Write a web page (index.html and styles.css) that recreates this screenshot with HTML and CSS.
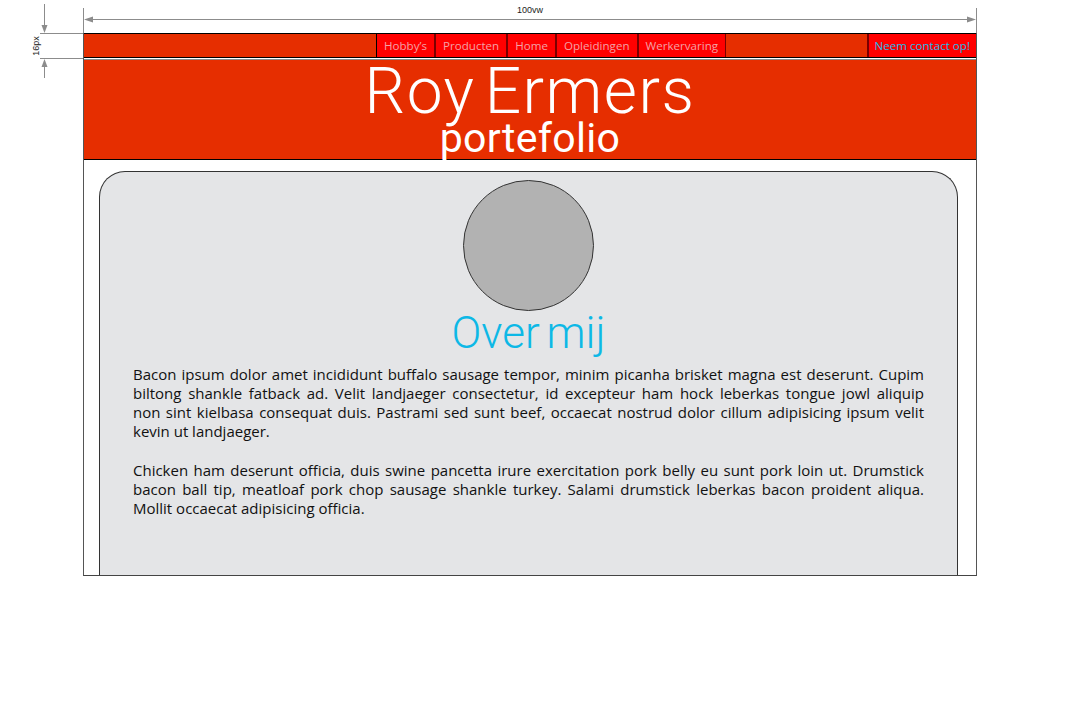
FILE: index.html
```html
<!DOCTYPE html>
<html lang="nl">
<head>
<meta charset="utf-8">
<title>Roy Ermers portefolio</title>
<link rel="stylesheet" href="styles.css">
</head>
<body>
<svg class="annot" width="1074" height="80" viewBox="0 0 1074 80" aria-hidden="true">
  <g stroke="#8c8c8c" stroke-width="1" fill="none">
    <line x1="83.5" y1="8" x2="83.5" y2="33"/>
    <line x1="976.5" y1="8" x2="976.5" y2="33"/>
    <line x1="92" y1="19.5" x2="967" y2="19.5"/>
    <line x1="40" y1="33.5" x2="83" y2="33.5"/>
    <line x1="40" y1="58.5" x2="83" y2="58.5"/>
    <line x1="44.5" y1="4" x2="44.5" y2="26"/>
    <line x1="44.5" y1="66" x2="44.5" y2="78"/>
  </g>
  <g fill="#8c8c8c">
    <polygon points="84,19.5 93,16.5 93,22.5"/>
    <polygon points="976,19.5 967,16.5 967,22.5"/>
    <polygon points="44.5,33 41.5,25 47.5,25"/>
    <polygon points="44.5,59 41.5,67 47.5,67"/>
  </g>
  <text x="530" y="13" class="dim" text-anchor="middle">100vw</text>
  <text x="0" y="0" class="dim" text-anchor="middle" transform="translate(39 46) rotate(-90)">16px</text>
</svg>

<div class="frame">
  <nav class="nav">
    <div class="nav-fill"></div>
    <a class="nav-item">Hobby’s</a>
    <a class="nav-item">Producten</a>
    <a class="nav-item">Home</a>
    <a class="nav-item">Opleidingen</a>
    <a class="nav-item">Werkervaring</a>
    <div class="nav-gap"></div>
    <a class="nav-item contact">Neem contact op!</a>
  </nav>
  <header class="header">
    <h1 class="title">Roy Ermers</h1>
    <p class="subtitle">portefolio</p>
  </header>
  <main class="main">
    <section class="card">
      <div class="avatar"></div>
      <h2 class="card-title">Over mij</h2>
      <p class="text">
        <span class="ln">Bacon ipsum dolor amet incididunt buffalo sausage tempor, minim picanha brisket magna est deserunt. Cupim</span>
        <span class="ln">biltong shankle fatback ad. Velit landjaeger consectetur, id excepteur ham hock leberkas tongue jowl aliquip</span>
        <span class="ln">non sint kielbasa consequat duis. Pastrami sed sunt beef, occaecat nostrud dolor cillum adipisicing ipsum velit</span>
        <span class="ln">kevin ut landjaeger.</span>
      </p>
      <p class="text">
        <span class="ln">Chicken ham deserunt officia, duis swine pancetta irure exercitation pork belly eu sunt pork loin ut. Drumstick</span>
        <span class="ln">bacon ball tip, meatloaf pork chop sausage shankle turkey. Salami drumstick leberkas bacon proident aliqua.</span>
        <span class="ln">Mollit occaecat adipisicing officia.</span>
      </p>
    </section>
  </main>
</div>
</body>
</html>
```

FILE: styles.css
```css
html, body {
  margin: 0;
  padding: 0;
  background: #ffffff;
}

body {
  position: relative;
  width: 1074px;
  height: 708px;
  overflow: hidden;
  font-family: "Open Sans", "Noto Sans", sans-serif;
}

.annot {
  position: absolute;
  left: 0;
  top: 0;
}

.dim {
  font-family: "Liberation Sans", Arial, sans-serif;
  font-size: 9px;
  fill: #222;
}

.frame {
  margin: 33px 0 0 83px;
  width: 892px;
  height: 542px;
  border-left: 1px solid #555;
  border-right: 1px solid #555;
  border-bottom: 1px solid #444;
  display: flex;
  flex-direction: column;
  overflow: hidden;
}

.nav {
  display: flex;
  height: 23px;
  background: #e62e00;
  border-top: 1px solid #000;
  border-bottom: 1px solid #000;
  margin-bottom: 1px;
}

.nav-fill {
  flex: 0 0 292px;
  border-right: 1px solid #000;
}

.nav-gap {
  flex: 1;
  border-left: 1px solid #7a0000;
  border-right: 2px solid #7a0000;
}

.nav-item {
  display: flex;
  align-items: center;
  justify-content: center;
  background: #ff0000;
  color: #f3a1a6;
  font-size: 11.6px;
  padding: 0 7px;
  border-right: 2px solid #7a0000;
  white-space: nowrap;
}

.nav-item:nth-of-type(5) {
  border-right: none;
}

.nav-item.contact {
  color: #22b9ea;
  border-right: none;
  padding: 0 6px 0 5px;
}

.header {
  height: 99px;
  background: #e62e00;
  border-top: 1px solid #8a8a8a;
  border-bottom: 1px solid #000;
  color: #fff;
  text-align: center;
  font-family: Roboto, "Open Sans", sans-serif;
  font-weight: 300;
}

.title {
  margin: 0;
  font-size: 64px;
  font-weight: 300;
  line-height: 56px;
  padding-top: 4px;
  letter-spacing: 1.5px;
  word-spacing: -8px;
}

.subtitle {
  margin: 0;
  font-size: 41px;
  font-weight: 400;
  line-height: 36px;
  letter-spacing: 0.3px;
}

.main {
  flex: 1;
  padding: 11px 18px 0 15px;
  display: flex;
}

.card {
  flex: 1;
  background: #e4e5e7;
  border: 1px solid #333;
  border-bottom: none;
  border-radius: 26px 26px 0 0;
  padding: 8px 33px 0 33px;
  display: flex;
  flex-direction: column;
  align-items: center;
}

.avatar {
  width: 129px;
  height: 129px;
  border-radius: 50%;
  background: #b2b2b2;
  border: 1px solid #333;
  flex: none;
}

.card-title {
  margin: 0;
  font-family: Roboto, "Open Sans", sans-serif;
  font-weight: 300;
  font-size: 44px;
  line-height: 44px;
  color: #0db8e6;
  word-spacing: -4px;
}

.text {
  align-self: stretch;
  margin: 10px 0 20px 0;
  font-family: "Open Sans", "Noto Sans", sans-serif;
  font-size: 15px;
  line-height: 19px;
  color: #111;
}

.text + .text {
  margin-top: 0;
}

.ln {
  display: block;
  white-space: nowrap;
  text-align: justify;
  text-align-last: justify;
}

.ln:last-child {
  text-align-last: left;
}
```
